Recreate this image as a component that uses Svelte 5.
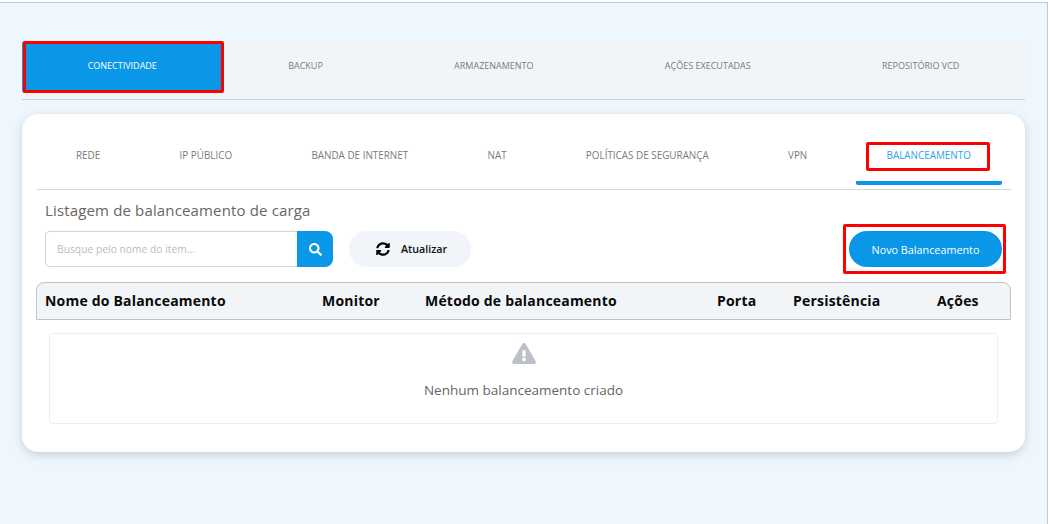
<script>
	const mainTabs = ['Conectividade', 'Backup', 'Armazenamento', 'Ações executadas', 'Repositório VCD'];
	const subTabs = ['Rede', 'IP público', 'Banda de internet', 'NAT', 'Políticas de segurança', 'VPN', 'Balanceamento'];
	const columns = [
		{ label: 'Nome do Balanceamento', width: '277px' },
		{ label: 'Monitor', width: '103px' },
		{ label: 'Método de balanceamento', width: '292px' },
		{ label: 'Porta', width: '76px' },
		{ label: 'Persistência', width: '144px' },
		{ label: 'Ações', width: 'auto' }
	];

	let activeMain = $state('Conectividade');
	let activeSub = $state('Balanceamento');
	let search = $state('');
</script>

<div class="page">
	<div class="frame">
		<nav class="main-tabs">
			{#each mainTabs as tab}
				<button class="main-tab" class:active={activeMain === tab} onclick={() => (activeMain = tab)}>{tab}</button>
			{/each}
		</nav>

		<section class="card">
			<nav class="sub-tabs">
				{#each subTabs as tab}
					<button class="sub-tab" class:active={activeSub === tab} onclick={() => (activeSub = tab)}>
						<span>{tab}</span>
					</button>
				{/each}
			</nav>

			<h2>Listagem de balanceamento de carga</h2>

			<div class="toolbar">
				<form class="search" onsubmit={(e) => e.preventDefault()}>
					<input type="text" bind:value={search} placeholder="Busque pelo nome do item..." />
					<button type="submit" aria-label="Buscar">
						<svg viewBox="0 0 512 512" width="13" height="13">
							<path fill="#fff" d="M505 442.7L405.3 343c-4.5-4.5-10.6-7-17-7H372c27.6-35.3 44-79.7 44-128C416 93.1 322.9 0 208 0S0 93.1 0 208s93.1 208 208 208c48.3 0 92.7-16.4 128-44v16.3c0 6.4 2.5 12.5 7 17l99.7 99.7c9.4 9.4 24.6 9.4 33.9 0l28.3-28.3c9.4-9.4 9.4-24.6.1-34zM208 336c-70.7 0-128-57.2-128-128 0-70.7 57.2-128 128-128 70.7 0 128 57.2 128 128 0 70.7-57.2 128-128 128z" />
						</svg>
					</button>
				</form>
				<button class="refresh">
					<svg viewBox="0 0 512 512" width="14" height="14">
						<path fill="#000" d="M370.72 133.28C339.458 104.008 298.888 87.962 255.848 88c-77.458.068-144.328 53.178-162.791 126.85-1.344 5.363-6.122 9.15-11.651 9.15H24.103c-7.498 0-13.194-6.807-11.807-14.176C33.933 94.924 134.813 8 256 8c66.448 0 126.791 26.136 171.315 68.685L463.03 40.97C478.149 25.851 504 36.559 504 57.941V192c0 13.255-10.745 24-24 24H345.941c-21.382 0-32.09-25.851-16.971-40.971l41.75-41.749zM32 296h134.059c21.382 0 32.09 25.851 16.971 40.971l-41.75 41.75c31.262 29.273 71.835 45.319 114.876 45.28 77.418-.07 144.315-53.144 162.787-126.849 1.344-5.363 6.122-9.15 11.651-9.15h57.304c7.498 0 13.194 6.807 11.807 14.176C478.067 417.076 377.187 504 256 504c-66.448 0-126.791-26.136-171.315-68.685L48.97 471.03C33.851 486.149 8 475.441 8 454.059V320c0-13.255 10.745-24 24-24z" />
					</svg>
					Atualizar
				</button>
				<button class="create">Novo Balanceamento</button>
			</div>

			<div class="table-head">
				{#each columns as col}
					<div style:width={col.width}>{col.label}</div>
				{/each}
			</div>

			<div class="empty">
				<svg viewBox="0 0 576 512" width="24" height="21">
					<path fill="#bcc1c9" d="M569.517 440.013C587.975 472.007 564.806 512 527.94 512H48.054c-36.937 0-59.999-40.055-41.577-71.987L246.423 24c18.467-32.009 64.72-31.951 83.154 0l239.94 416.013zM288 354c-25.405 0-46 20.595-46 46s20.595 46 46 46 46-20.595 46-46-20.595-46-46-46zm-43.673-165.346l7.418 136c.347 6.364 5.609 11.346 11.982 11.346h48.546c6.373 0 11.635-4.982 11.982-11.346l7.418-136c.375-6.874-5.098-12.654-11.982-12.654h-63.383c-6.884 0-12.356 5.78-11.981 12.654z" />
				</svg>
				<p>Nenhum balanceamento criado</p>
			</div>
		</section>
	</div>
</div>

<style>
	:global(body) {
		background: #fff;
	}

	.page {
		box-sizing: border-box;
		height: 524px;
		width: 1048px;
		margin-top: 2px;
		background: #eff7fe;
		border-top: 1px solid #c3c7cb;
		border-right: 1px solid #c3c7cb;
		font-family: 'Open Sans', 'Liberation Sans', sans-serif;
		overflow: hidden;
	}

	.frame {
		width: 1003px;
		margin-left: 22px;
		padding-top: 38px;
	}

	button {
		font-family: inherit;
		border: none;
		cursor: pointer;
	}

	.main-tabs {
		display: flex;
		height: 58px;
		background: #f2f5f8;
		border-bottom: 1px solid #c8d2de;
		border-radius: 8px 8px 0 0;
	}

	.main-tab {
		position: relative;
		flex: 1 1 auto;
		height: 52px;
		padding: 0 0 4px;
		background: none;
		font-size: 9px;
		text-transform: uppercase;
		color: #7a7a7a;
	}

	.main-tab.active {
		background: #0a97e8;
		color: #fff;
		border-radius: 3px;
	}

	.main-tab.active::after {
		content: '';
		position: absolute;
		inset: 0 -1px 0 1px;
		border: 3px solid #f00;
		border-radius: 2px;
	}

	.card {
		margin-top: 14px;
		height: 338px;
		box-sizing: border-box;
		padding: 0 14px 0 15px;
		background: #fff;
		border-radius: 16px;
		box-shadow: 0 3px 10px rgba(90, 110, 120, 0.28);
	}

	.sub-tabs {
		display: flex;
		justify-content: space-between;
		height: 75px;
		padding: 0 9px 0 8px;
		border-bottom: 1px solid #d4d7da;
	}

	.sub-tab {
		position: relative;
		box-sizing: content-box;
		height: 53px;
		padding: 14px 31px 0;
		background: none;
		font-size: 9.9px;
		text-transform: uppercase;
		color: #7a7a7a;
		border-bottom: 4px solid transparent;
	}

	.sub-tab.active {
		color: #2aa3ea;
		border-bottom-color: #0a97e8;
		border-radius: 2px;
	}

	.sub-tab.active span::after {
		content: '';
		position: absolute;
		left: 10px;
		right: 12px;
		top: 28px;
		height: 29px;
		box-sizing: border-box;
		border: 3px solid #f00;
		border-radius: 2px;
	}

	h2 {
		margin: 10px 0 0 8px;
		font-size: 15px;
		letter-spacing: 0.15px;
		line-height: 20px;
		font-weight: 400;
		color: #666;
	}

	.toolbar {
		display: flex;
		align-items: center;
		margin: 11px 9px 0 8px;
		height: 36px;
	}

	.search {
		display: flex;
		height: 36px;
		width: 288px;
	}

	.search input {
		flex: 1;
		min-width: 0;
		box-sizing: border-box;
		padding: 0 11px;
		border: 1px solid #cfd3da;
		border-right: none;
		border-radius: 5px 0 0 5px;
		font-family: inherit;
		font-size: 10.3px;
		outline: none;
	}

	.search input::placeholder {
		color: #b9bcc4;
	}

	.search button {
		width: 36px;
		padding: 0;
		background: #0a97e8;
		border-radius: 0 8px 8px 0;
		display: flex;
		align-items: center;
		justify-content: center;
	}

	.refresh {
		display: flex;
		align-items: center;
		gap: 11px;
		height: 36px;
		width: 122px;
		margin-left: 16px;
		padding: 0 0 0 27px;
		background: #f1f4f8;
		border-radius: 18px;
		font-size: 10.7px;
		font-weight: 600;
		color: #111;
	}

	.create {
		position: relative;
		height: 36px;
		width: 153px;
		margin-left: auto;
		padding: 0;
		background: #0a97e8;
		border-radius: 18px;
		font-size: 10.8px;
		color: #fff;
	}

	.create::after {
		content: '';
		position: absolute;
		inset: -7px -4px -7px -6px;
		border: 3px solid #f00;
		border-radius: 2px;
	}

	.table-head {
		display: flex;
		align-items: center;
		box-sizing: border-box;
		height: 38px;
		margin: 15px 0 0 -1px;
		padding: 0 0 2px 8px;
		background: #f1f5f8;
		border: 1px solid #c0c4c8;
		border-radius: 8px 8px 0 0;
		font-size: 14px;
		font-weight: 700;
		color: #0a0a0a;
		letter-spacing: 0.2px;
	}

	.empty {
		box-sizing: border-box;
		height: 91px;
		margin: 13px 13px 0 12px;
		padding-top: 9px;
		border: 1px solid #eeeeee;
		border-radius: 4px;
		text-align: center;
	}

	.empty svg {
		display: block;
		margin: 0 auto;
	}

	.empty p {
		margin: 16px 0 0;
		font-size: 13.5px;
		line-height: 20px;
		color: #666;
	}
</style>
